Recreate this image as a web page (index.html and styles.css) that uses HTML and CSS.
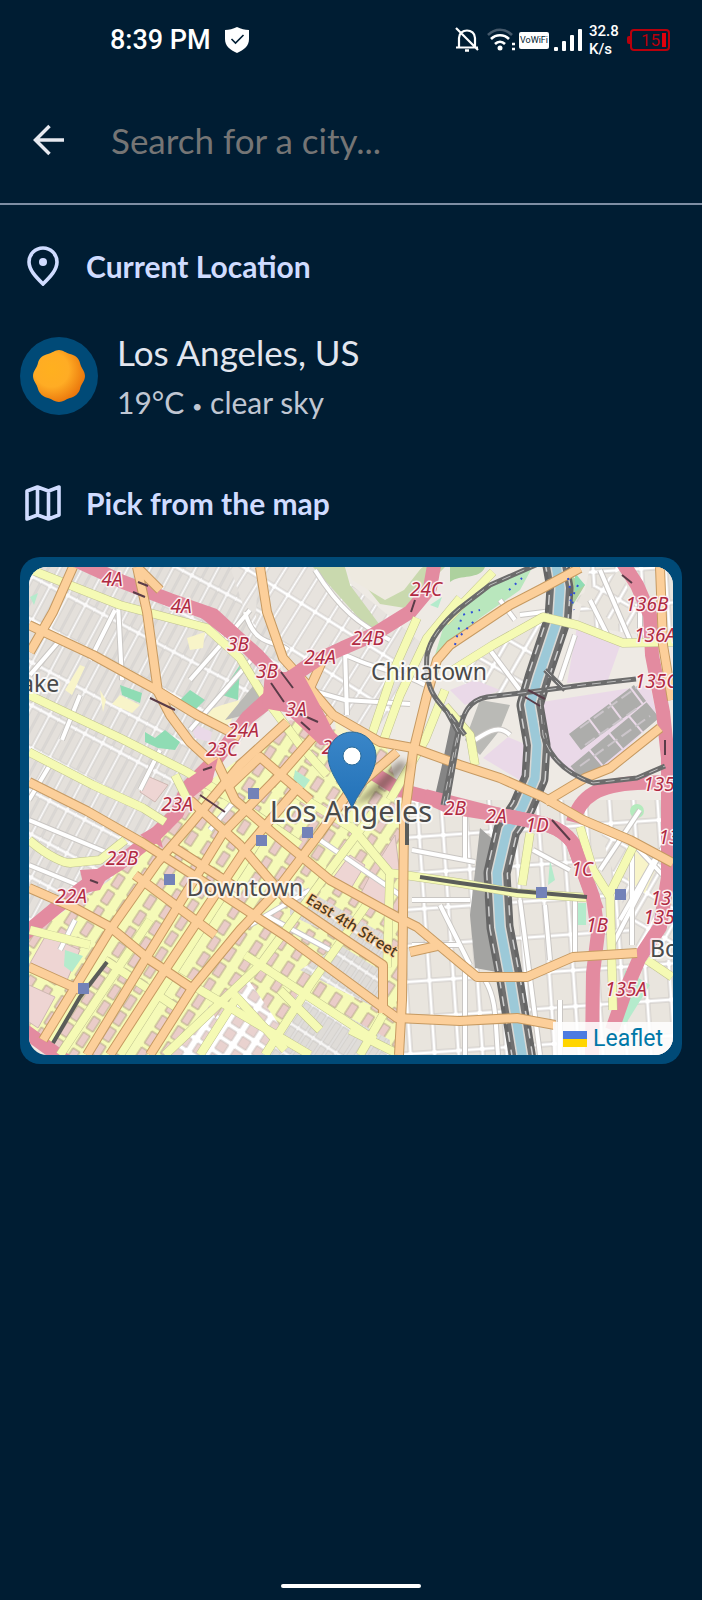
FILE: index.html
```html
<!DOCTYPE html>
<html lang="en">
<head>
<meta charset="utf-8">
<meta name="viewport" content="width=device-width, initial-scale=1">
<title>Search for a city</title>
<link rel="stylesheet" href="styles.css">
</head>
<body>
<div class="screen">
  <div class="status">
    <div class="status-left">
      <span class="clock">8:39 PM</span>
      <svg class="shield" viewBox="0 0 24 26" aria-hidden="true"><path d="M12 0 C8 2 4 3 0 3 V12 C0 19 5 23 12 26 C19 23 24 19 24 12 V3 C20 3 16 2 12 0Z" fill="#fff"/><path d="M6.500 12 L10.500 16 L18.500 8" fill="none" stroke="#001d33" stroke-width="1.600"/></svg>
    </div>
    <div class="status-right">
      <svg class="bell" viewBox="0 0 24 26" fill="none" stroke="#fff" stroke-width="2.200" aria-hidden="true"><path d="M4 20 V11 C4 1 20 1 20 11 V20 M1 20.500 H23 M1 1 L23 23"/><path d="M10 23.500 H14" stroke-width="2.500"/></svg>
      <svg class="wifi" viewBox="0 0 28 24" fill="none" stroke-width="2.600" aria-hidden="true"><path d="M1 7 C8 0 18 0 25 7" stroke="#45596b"/><path d="M4 11 C9 6 17 6 22 11 M8 16 C11 13 15 13 18 16" stroke="#fff"/><circle cx="13" cy="20" r="2.500" fill="#fff"/><path d="M25 16 h3 M25 21 h3" stroke="#fff"/></svg>
      <span class="vowifi">VoWiFi</span>
      <svg class="signal" viewBox="0 0 28 22" fill="#fff" aria-hidden="true"><rect y="18" width="4" height="4" rx="1"/><rect x="8" y="12" width="4" height="10" rx="1"/><rect x="16" y="6" width="4" height="16" rx="1"/><rect x="24" width="4" height="22" rx="1"/></svg>
      <span class="speed">32.8<br>K/s</span>
      <span class="battery">15</span>
    </div>
  </div>

  <header class="search">
    <button class="back" type="button" aria-label="Back"><svg viewBox="0 0 32 32" fill="none" stroke="#e6e9f0" stroke-width="3.500"><path d="M31.500 16 H3 M17 2 L3 16 L17 30"/></svg></button>
    <input class="field" type="text" placeholder="Search for a city..." aria-label="Search for a city">
  </header>

  <main class="content">
    <h2 class="heading">
      <svg viewBox="0 0 40 40" fill="none" stroke="#d0dcff" stroke-width="3.600" aria-hidden="true"><path d="M20 38 C13 31 6 24 6 16 A14 14 0 0 1 34 16 C34 24 27 31 20 38Z"/><circle cx="20" cy="16" r="4" fill="#d0dcff" stroke="none"/></svg>
      Current Location
    </h2>
    <div class="place">
      <div class="avatar">
        <svg viewBox="0 0 52 52" aria-hidden="true"><defs><radialGradient id="sun" cx=".36" cy=".38" r=".66"><stop offset="0" stop-color="#ffb01f"/><stop offset=".5" stop-color="#ffac24"/><stop offset="1" stop-color="#ea760c"/></radialGradient></defs><path d="M26 0 C30 0 33 3 37 4 C42 5 46 8 47 13 C48 18 52 21 52 26 C52 31 48 34 47 39 C46 43 42 47 37 48 C33 49 30 52 26 52 C22 52 19 49 15 48 C10 47 6 43 5 39 C4 34 0 31 0 26 C0 21 4 18 5 13 C6 8 10 5 15 4 C19 3 22 0 26 0Z" fill="url(#sun)"/></svg>
      </div>
      <div>
        <p class="city">Los Angeles, US</p>
        <p class="weather">19°C <span class="dot">•</span> clear sky</p>
      </div>
    </div>
    <h2 class="heading">
      <svg viewBox="0 0 40 40" fill="none" stroke="#d0dcff" stroke-width="3.600" aria-hidden="true"><path d="M4 8 L14.500 4 L25.500 8 L36 4 V32 L25.500 36 L14.500 32 L4 36Z M14.500 4 V32 M25.500 8 V36" stroke-linejoin="round"/></svg>
      Pick from the map
    </h2>
    <section class="card" aria-label="Map">
      <svg class="map" viewBox="29 567 644 488">
        <defs>
          <pattern id="west" width="38" height="20" patternUnits="userSpaceOnUse" patternTransform="rotate(-62)"><rect width="38" height="20" fill="#fbfafa"/><path d="M2 1H36V9H2Z M2 10H36V18H2Z" fill="#e4e0db" stroke="#cfccc9"/></pattern>
          <pattern id="north" width="44" height="16" patternUnits="userSpaceOnUse" patternTransform="rotate(-58)"><rect width="44" height="16" fill="#fff"/><path d="M2 1H42V14H2Z" fill="#e7e3de" stroke="#cfccc9"/></pattern>
          <pattern id="east" width="24" height="36" patternUnits="userSpaceOnUse" patternTransform="rotate(-4)"><rect width="24" height="36" fill="#fff"/><path d="M2 2H22V34H2Z" fill="#e9e5de" stroke="#cbc8c5"/></pattern>
          <pattern id="tilt" width="30" height="19" patternUnits="userSpaceOnUse" patternTransform="rotate(-60)"><rect width="30" height="19" fill="#fff"/><path d="M2 2H28V17H2Z" fill="#e9e5de" stroke="#cbc8c5"/></pattern>
          <pattern id="downtown" width="19" height="19" patternUnits="userSpaceOnUse" patternTransform="rotate(33)"><rect width="19" height="19" fill="#f5fab8"/><path d="M5 3H13V17H5Z" fill="#eaccc8" stroke="#b5a888"/></pattern>
          <pattern id="south" width="17" height="15" patternUnits="userSpaceOnUse" patternTransform="rotate(33)"><rect width="17" height="15" fill="#fff"/><path d="M3 2H13V12H3Z" fill="#e9d2cf" stroke="#cbc1bd"/></pattern>
          <pattern id="lofts" width="9" height="28" patternUnits="userSpaceOnUse" patternTransform="rotate(33)"><rect width="9" height="28" fill="#f6f5f4"/><path d="M1 2H8V26H1Z" fill="#dfdcd8" stroke="#cbc8c5"/></pattern>
          <linearGradient id="pin" x1="0" y1="0" x2="0" y2="1"><stop offset="0" stop-color="#3a86c8"/><stop offset="1" stop-color="#2372b8"/></linearGradient>
          <filter id="soft"><feGaussianBlur stdDeviation="3"/></filter>

          <g id="streets">
            <path d="M118 604 L122 680 M115 610 L90 660 M30 675 L60 640 M80 695 L62 740 M225 640 L250 610 M245 612 C255 650 280 640 288 650 M315 570 C340 610 360 625 390 640 M330 647 C370 670 400 670 425 685 M310 690 L345 700 L410 704 M345 650 L347 715 M190 680 L225 640 M29 820 L130 862 M29 865 L90 890 M140 790 L160 750 M190 730 L260 650 M29 800 L50 765 M60 950 L75 920"/>
            <path d="M412 850 L475 862 M412 900 L470 900 M440 905 L470 965 M465 810 V860 M412 945 H460 M465 965 V1055 M485 980 C497 1000 495 1020 498 1055 M533 850 L570 870 M545 905 L550 960 M520 900 L540 1055 M560 1000 V1055 M575 900 V955 M630 840 L672 885 M600 870 L640 810 M610 950 L672 830 M620 920 L660 850 M632 850 V945 M490 650 L520 690 M560 680 L575 635 M500 600 L515 620 M590 600 L610 640 M600 570 L630 640 M640 590 V640 M475 740 C490 730 500 725 510 735 M520 615 L560 610"/>
            <path d="M320 840 L400 895 M250 925 L310 890 M265 915 L330 950 M210 830 L235 800"/>
          </g>
          <g id="yellow">
            <path d="M29 569 L120 605 L207 628 L240 658 L263 695 L300 745 L327 775"/>
            <path d="M29 695 L120 738 L187 772 L240 804 L300 845"/>
            <path d="M29 752 L93 785 L143 808 L165 822 M29 840 C50 858 65 863 70 863 L100 860 L125 840"/>
            <path d="M175 775 L190 805 M417 618 L393 672 L370 740 M460 598 L427 638 L400 695 L383 742 M445 690 L425 740 L390 800"/>
            <path d="M445 622 L493 572 M450 672 L493 645 L543 617 L577 625 L623 643 L673 642 M445 706 L470 735 L475 765 M390 873 L387 967"/>
            <path d="M350 825 L375 855 L390 873 L460 883 L517 893 L593 898 M530 833 L522 885 M580 827 L593 870 L610 897 L613 1010 M633 847 L608 897 M647 960 L672 977"/>
            <path d="M30 930 L90 945 M175 975 L310 1055 M245 955 L375 1040 M265 1055 L310 985 L370 900 M400 1055 L350 1030 M165 1055 L260 965 L330 870 L375 810 M200 1055 L235 1000 M60 1055 L150 920 M120 1055 L210 915 L265 830 M105 960 L180 1010 M290 790 L355 830"/>
            <path d="M383 1015 L360 1055 M280 990 L320 1030 M230 990 L285 1050"/>
          </g>
          <g id="orange">
            <path d="M73 567 L53 612 L30 652 M29 625 L93 655 L153 688 L197 715 L240 737"/>
            <path d="M137 567 L147 612 L158 692 L170 715 L190 742 L215 765 M137 567 L160 590"/>
            <path d="M29 782 L87 811 L143 843 L190 873 L287 937 L397 1018 L460 1021 L517 1018 L555 1025"/>
            <path d="M260 567 L267 612 L283 658 L310 688 L333 715 L380 742 L413 748 L460 765 L500 778 L543 797 L583 820 L630 840 L673 863"/>
            <path d="M580 568 L543 588 L510 605 L450 645 L437 660 L427 695 L413 752 L404 820 L403 917 L402 1000 L399 1055"/>
            <path d="M215 758 L235 800 L273 833 L330 880 L397 917 L417 927 L460 963 L477 977 L527 977 L573 957 L637 953"/>
            <path d="M190 800 L240 845 L287 900 L350 943 L383 965 L383 1013 M410 952 L437 946"/>
            <path d="M545 802 L585 778 L610 768 L660 728 M660 567 L663 645 L672 700"/>
            <path d="M29 888 L75 908 L110 927 L150 960 L190 987 M29 967 L80 990"/>
            <path d="M43 1040 L110 930 L157 863 L190 825 L240 765 L287 722"/>
            <path d="M87 1055 L143 963 L223 833 L280 775 L330 718"/>
            <path d="M150 1055 L193 987 L240 930 L273 895 L320 833 L347 795 L397 752"/>
            <path d="M110 1055 L165 970 L245 850 L300 785 M310 688 L325 655 M230 785 L260 757 L310 800 M135 875 L215 935 M170 845 L240 890"/>
          </g>
          <g id="motorway">
            <path d="M77 561 L123 582 L170 600 L213 615 L240 640 L257 655 L280 680 L307 712 L330 738 L360 765 L400 790 L430 798 L450 807 L500 815 C540 822 560 825 573 843 L583 870 L593 897 L598 933 L593 973 L592 1055"/>
            <path d="M20 938 L57 907 L93 880 L120 863 L153 837 L177 813 L187 788 L217 758 L247 718 L273 698 L290 678 L313 662 L343 648 L373 635 L410 612 L430 588 L435 560"/>
            <path d="M621 560 L637 585 L650 615 L652 655 L663 712 L668 758 L668 877 L660 927 L640 957 L627 987 L612 1030"/>
            <path d="M573 822 C580 795 600 785 637 783 L668 782 M18 1026 L70 1064"/>
          </g>
          <path id="river" d="M555 560 L560 588 L558 618 L538 678 L530 705 L537 745 L535 778 L522 808 L507 830 L497 873 L500 927 L510 980 L523 1060"/>
          <g id="rail">
            <path d="M538 564 L490 585 L460 608 C440 625 430 640 427 655 C424 690 437 700 447 712 L458 732 L450 770 L443 805"/>
            <path d="M447 802 L457 745 C462 710 470 700 487 697 L530 692 L583 685 L636 679"/>
            <path d="M540 700 L543 735 C550 760 570 775 593 783 L637 778 L665 766 M545 670 L565 690 M450 715 L465 735"/>
          </g>
        </defs>

        <rect x="29" y="567" width="644" height="488" fill="#eeeae4"/>
        <path d="M29 567 H260 L285 690 L190 800 L100 890 L29 930Z" fill="url(#west)"/>
        <path d="M262 567 H330 L430 650 L370 740 L283 670Z M230 567 H258 L255 640Z" fill="url(#north)"/>
        <path d="M400 800 H673 V1055 H398Z M590 567 H673 V640 L577 625Z" fill="url(#east)"/>
        <path d="M600 830 L673 860 V960 H640Z M450 672 L543 620 L535 690 L480 695Z M573 600 L620 570 L650 640Z" fill="url(#tilt)"/>
        <path d="M400 690 L440 700 L440 750 L415 748Z" fill="#eeeae4"/>
        <path d="M165 815 L290 720 L385 740 L400 800 V1055 H50 L29 1030 V935 L110 880Z" fill="url(#downtown)"/>
        <path d="M190 1055 L245 975 L300 1055Z M170 1055 L210 1005 L230 1055Z" fill="url(#south)"/>
        <path d="M262 1055 L300 990 L390 1040 V1055Z M300 970 L340 945 L380 970 V1010Z M290 880 L385 935 V960 L290 915Z" fill="url(#lofts)"/>
        <path d="M46 935 L80 950 L65 985 L29 965Z M29 985 L55 997 L38 1028 L29 1022Z M145 775 L168 785 L155 802 L140 792Z M395 835 L400 875 L378 862Z M350 855 L365 865 L350 890 L333 878Z M372 872 L390 888 V910 L360 895Z" fill="#eed5d3" stroke="#ceb8b2"/>

        <g class="park">
          <path d="M313 567 L365 625 L385 632 L350 585 L345 567Z M350 567 L385 595 L423 567 H445 L405 608 L380 604Z" fill="#c9d9ae"/>
          <path d="M345 567 L352 580 L385 600 L404 590 L422 567Z" fill="#eeeae0"/>
          <path d="M435 655 L447 615 L490 587 L532 568 L520 590 L480 618Z" fill="#b9e7bd"/>
          <path d="M450 582 C460 574 480 580 485 567 H450Z M570 575 L585 585 L570 610Z" fill="#add19e"/>
          <path d="M190 690 L205 700 L195 710 L178 702Z M230 680 L240 665 L238 700 L222 695Z M120 685 L142 693 L140 703 L122 695Z M145 732 L155 738 L165 730 L180 742 L175 750 L158 748 L145 742Z M575 573 L585 585 L575 592Z" fill="#8fdcb4"/>
          <path d="M65 950 L83 956 L72 972 L64 966Z M430 605 L442 597 L438 608Z M625 970 L650 985 L625 1025 L615 1022Z M578 903 H586 V925 H578Z M295 770 L310 780 L303 790 L293 783Z M30 597 L38 593 L34 605Z M550 860 L555 880 L548 885Z" fill="#b4ebcc"/>
          <circle cx="637" cy="811" r="7"/>
          <path d="M120 695 L140 705 L132 713 L112 704Z M195 715 L222 705 L240 700 L225 735Z M187 638 L205 632 L203 648 L190 650Z M80 665 L85 667 L72 695 L65 690Z M100 690 L106 700 L103 712Z M335 720 L352 735 L337 745Z M635 850 L655 870 L645 893 L628 880Z" fill="#f8f4c9"/>
        </g>
        <g fill="#ead9e8">
          <path d="M577 627 L620 646 L608 680 L567 683Z M542 702 L650 685 L657 718 L617 758 L583 778 L550 758Z M483 758 L508 737 L527 745 L523 782Z M450 690 L475 680 L500 690 L465 705Z M190 722 L212 732 L210 742 L195 738Z"/>
        </g>
        <path d="M480 700 L510 705 L500 730 L480 755 L465 740Z M225 720 L258 680 L262 700 L245 715Z" fill="#babab6"/>
        <path d="M480 828 L496 842 L484 890 L497 972 L475 968 L470 915Z" fill="#a4a4a2"/>
        <path class="yard" d="M575 742 L640 693 M577 774 L653 710"/>
        <path class="yard-gap" d="M580 728 L640 685 M585 745 L640 706 M580 766 L650 716"/>
        <path d="M452 718 L462 715 L456 760 L446 802 L434 800 L442 765Z" fill="#858585"/>

        <use href="#streets" class="street-edge"/><use href="#streets" class="street"/>
        <use href="#river" class="bank"/><use href="#river" class="bank-ties"/><use href="#river" class="bank-inner"/><use href="#river" class="shore"/><use href="#river" class="water"/>
        <use href="#motorway" class="motorway"/>
        <use href="#yellow" class="yellow-edge"/><use href="#yellow" class="yellow"/>
        <use href="#orange" class="orange-edge"/><use href="#orange" class="orange"/>
        <path class="motorway" d="M205 612 L240 640 L280 680 L320 728 M247 718 L290 678 L320 658 M425 796 L500 815 C540 822 560 825 573 843 L597 910"/>
        <path class="interchange" d="M265 672 L302 672 L325 715 L340 745 L320 745 L285 712 L262 708Z M80 870 L112 868 L100 890 L85 893Z M140 835 L157 825 L163 848 L150 840Z M186 780 L218 758 L212 782 L192 798Z"/>
        <use href="#rail" class="rail"/><use href="#rail" class="rail-dash"/>
        <path class="line" d="M420 877 L460 883 L517 891 L587 897 M107 962 L80 997 L53 1043 M407 820 V845"/>
        <path class="dark" d="M138 582 L148 586 M133 592 L145 597 M150 698 L175 710 M281 672 L293 688 M271 683 L284 702 M300 714 L318 722 M301 722 L310 730 M203 770 L212 767 M90 880 L98 883 M415 600 L411 612 M622 575 L632 583 M552 820 L570 840 M665 740 V755"/>
        <path class="dark" d="M200 795 L225 812 M528 690 L545 699 M525 697 L540 706"/>
        <path class="dots" d="M455 645 L462 615 L480 610 M461 635 L475 620 M509 590 L522 578 M568 578 L574 610 M578 585 L570 602"/>

        <g fill="#7382b8">
          <rect x="248" y="788" width="11" height="11"/><rect x="256" y="835" width="11" height="11"/><rect x="302" y="827" width="11" height="11"/><rect x="164" y="874" width="11" height="11"/><rect x="78" y="983" width="11" height="11"/><rect x="536" y="887" width="11" height="11"/><rect x="615" y="889" width="11" height="11"/>
        </g>

        <path d="M352 806 L400 760 L408 765 L380 795Z" fill="#493e30" opacity=".5" filter="url(#soft)"/>
        <g class="exit" text-anchor="middle">
          <text x="112" y="586">4A</text><text x="181" y="613">4A</text><text x="238" y="651">3B</text><text x="267" y="678">3B</text><text x="296" y="716">3A</text>
          <text x="426" y="596">24C</text><text x="368" y="645">24B</text><text x="320" y="664">24A</text><text x="243" y="737">24A</text><text x="222" y="756">23C</text>
          <text x="177" y="811">23A</text><text x="122" y="865">22B</text><text x="71" y="903">22A</text>
          <text x="647" y="611">136B</text><text x="655" y="642">136A</text><text x="656" y="688">135C</text><text x="659" y="791">135</text>
          <text x="455" y="815">2B</text><text x="496" y="823">2A</text><text x="537" y="832">1D</text><text x="582" y="876">1C</text><text x="597" y="932">1B</text>
          <text x="669" y="844">13</text><text x="661" y="905">13</text><text x="659" y="924">135</text><text x="626" y="996">135A</text><text x="327" y="754">2</text>
        </g>
        <g class="area">
          <text x="9" y="692">Lake</text><text x="429" y="680" text-anchor="middle">Chinatown</text><text x="245" y="896" text-anchor="middle">Downtown</text><text x="650" y="957">Boyle</text>
          <text class="metro" x="351" y="822" text-anchor="middle">Los Angeles</text>
          <text class="road-name" transform="translate(305 902) rotate(32)">East 4th Street</text>
        </g>
        <path d="M352 808 C346 792 328 774 328 756 A24 24 0 0 1 376 756 C376 774 358 792 352 808Z" fill="url(#pin)" stroke="#2e6c97" stroke-width="1"/>
        <circle cx="352" cy="756" r="9" fill="#fff" stroke="#2e6c97"/>
      </svg>
      <a class="credit" href="#leaflet"><svg viewBox="0 0 24 16" aria-hidden="true"><path fill="#4c7be1" d="M0 0h24v8H0z"/><path fill="#ffd500" d="M0 8h24v8H0z"/></svg>Leaflet</a>
    </section>
  </main>
  <div class="home"></div>
</div>
</body>
</html>
```
FILE: styles.css
```css
* { box-sizing: border-box; }
body { margin: 0; background: #001d33; color: #e2e6ef; font-family: Lato, "Liberation Sans", sans-serif; }
.screen { min-height: 100vh; display: flex; flex-direction: column; }
svg { display: block; }

.status { height: 80px; padding: 0 32px 0 110px; display: flex; justify-content: space-between; align-items: center; font-family: Roboto, sans-serif; color: #fff; }
.status-left, .status-right { display: flex; align-items: center; }
.status-left { gap: 14px; }
.clock { font-size: 27px; font-weight: 500; }
.shield { width: 24px; height: 26px; }
.bell { width: 24px; height: 26px; margin-right: 8px; }
.wifi { width: 28px; height: 24px; margin-right: 4px; }
.vowifi { width: 30px; height: 17px; margin-right: 5px; border-radius: 2px; background: #fff; color: #001d33; font: 9px/17px Roboto, sans-serif; text-align: center; }
.signal { width: 28px; height: 22px; margin-right: 7px; }
.speed { width: 41px; font-size: 15px; line-height: 18px; font-weight: 500; }
.battery { position: relative; width: 40px; height: 22px; border: 2px solid #b9000c; border-radius: 4px; color: #b9000c; font-size: 17px; line-height: 18px; padding-left: 9px; }
.battery::before { content: ""; position: absolute; left: -5px; top: 5px; width: 3px; height: 8px; background: #b9000c; border-radius: 2px 0 0 2px; }
.battery::after { content: ""; position: absolute; right: 2px; top: 2px; width: 4px; height: 14px; background: #e0000c; }

.search { height: 125px; padding: 0 32px 4px; display: flex; align-items: center; gap: 46px; border-bottom: 2px solid #7e8ea4; }
.back { width: 33px; height: 32px; padding: 0; border: 0; background: none; }
.back svg { width: 33px; height: 32px; }
.field { flex: 1; min-width: 0; padding: 0; border: 0; outline: 0; background: none; color: #e2e6ef; font: 35px/48px Lato, sans-serif; }
.field::placeholder { color: #757575; opacity: 1; }

.content { padding: 37px 20px; }
.heading { margin: 0; padding: 0 3px; height: 48px; display: flex; align-items: center; gap: 23px; font-size: 30px; line-height: 48px; font-weight: 700; color: #d0dcff; }
.heading svg { width: 40px; height: 40px; }
.place { display: flex; align-items: center; gap: 19px; margin: 36px 0 53px; }
.avatar { width: 78px; height: 78px; border-radius: 50%; background: #004a77; display: grid; place-items: center; }
.avatar svg { width: 52px; height: 52px; }
.city, .weather { margin: 0; }
.city { font-size: 35px; line-height: 52px; }
.weather { font-size: 30px; line-height: 48px; color: #c0c7d3; }
.dot { font-size: 18px; line-height: 18px; vertical-align: middle; }

.card { position: relative; margin-top: 30px; padding: 10px 9px 9px; background: #004a77; border-radius: 20px; }
.map { width: 100%; height: auto; border-radius: 18px; overflow: hidden; }
.credit { position: absolute; right: 9px; bottom: 9px; height: 33px; padding: 0 10px; display: flex; align-items: center; gap: 6px; border-bottom-right-radius: 18px; background: rgba(255, 255, 255, .85); color: #0078a8; font: 23px/32px Roboto, sans-serif; text-decoration: none; }
.credit svg { width: 24px; height: 16px; }

.street-edge, .street, .yellow-edge, .yellow, .orange-edge, .orange, .motorway, .bank, .bank-ties, .bank-inner, .shore, .water, .rail, .rail-dash, .line, .dark, .dots, .yard, .yard-gap { fill: none; stroke-linejoin: round; }
.street-edge { stroke: #c9c6c3; stroke-width: 6px; }
.street { stroke: #fff; stroke-width: 4px; }
.yellow-edge { stroke: #c0c390; stroke-width: 9px; }
.yellow { stroke: #f5fab4; stroke-width: 8px; }
.orange-edge { stroke: #c69a62; stroke-width: 10px; }
.orange { stroke: #fccf9a; stroke-width: 8px; }
.motorway { stroke: #e38ba0; stroke-width: 14px; }
.interchange { fill: #e38ba0; }
.bank { stroke: #666; stroke-width: 27px; }
.bank-ties { stroke: #d0d0d0; stroke-width: 22px; stroke-dasharray: 10 8; }
.bank-inner { stroke: #707070; stroke-width: 19px; }
.shore { stroke: #d9d8d4; stroke-width: 12px; }
.water { stroke: #9cc9d8; stroke-width: 9px; }
.rail { stroke: #6c6c6c; stroke-width: 5px; }
.rail-dash { stroke: #bbb; stroke-width: 1px; stroke-dasharray: 9 6; }
.line { stroke: #5b5d5a; stroke-width: 4px; }
.dark { stroke: #5a3c48; stroke-width: 2px; }
.dots { stroke: #3150d8; stroke-width: 2px; stroke-dasharray: 2 6; }
.yard { stroke: #adadab; stroke-width: 20px; stroke-dasharray: 24 2; }
.yard-gap { stroke: #cbc5ca; stroke-width: 2px; stroke-dasharray: 12 5; }
.park circle { fill: #b4ebbd; }

.exit { font: italic 19px "Noto Sans", sans-serif; fill: #b02a42; stroke: #fbeef0; stroke-width: 3px; paint-order: stroke; stroke-linejoin: round; }
.area { font: 23px "Noto Sans", sans-serif; fill: #4a4a4a; stroke: rgba(255, 255, 255, .75); stroke-width: 4px; paint-order: stroke; stroke-linejoin: round; }
.metro { font-size: 29px; }
.road-name { font-size: 15px; font-weight: 500; fill: #4b3820; stroke: #fccf9a; stroke-width: 2px; }

.home { width: 20%; height: 4px; margin: auto auto 12px; border-radius: 2px; background: #fff; }
```
